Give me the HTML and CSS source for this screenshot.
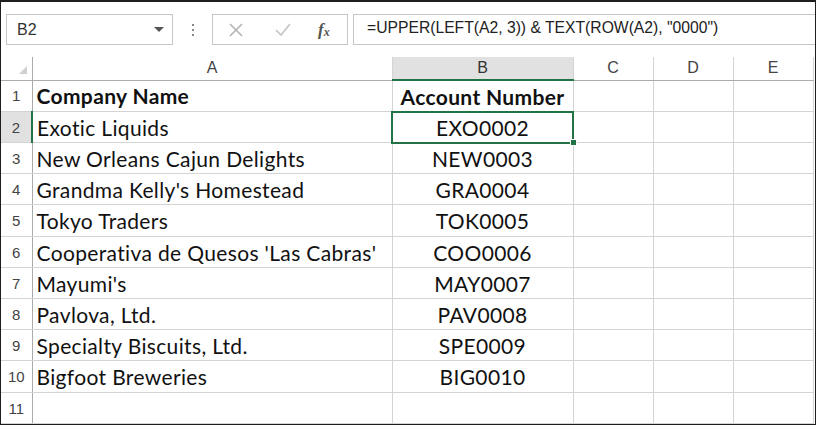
FILE: index.html
```html
<!DOCTYPE html>
<html lang="en">
<head>
  <meta charset="UTF-8">
  <title>Book1 - Account Numbers</title>
  <link rel="stylesheet" href="styles.css">
</head>
<body>
  <div class="sheet">
    <!-- name box + formula bar -->
    <div class="formula-bar">
      <div class="name-box">
        <span>B2</span>
        <span class="caret"></span>
      </div>
      <div class="grip"><i></i><i></i><i></i></div>
      <div class="fx-buttons">
        <svg class="btn-cancel" width="16" height="16" viewBox="0 0 16 16">
          <path d="M2 2 L14 14 M14 2 L2 14" stroke="#b4b4b4" stroke-width="1.6" fill="none"/>
        </svg>
        <svg class="btn-enter" width="18" height="16" viewBox="0 0 18 16">
          <path d="M2 8 L7 13 L16 2" stroke="#c4c4c4" stroke-width="1.6" fill="none"/>
        </svg>
        <span class="btn-fx">f<sub>x</sub></span>
      </div>
      <div class="formula-input">=UPPER(LEFT(A2, 3)) &amp; TEXT(ROW(A2), "0000")</div>
    </div>

    <!-- worksheet grid -->
    <table class="grid">
      <colgroup>
        <col class="c-rowhead">
        <col class="c-a">
        <col class="c-b">
        <col class="c-c">
        <col class="c-d">
        <col class="c-e">
      </colgroup>
      <thead>
        <tr>
          <th class="corner"><span class="corner-tri"></span></th>
          <th>A</th>
          <th class="active">B</th>
          <th>C</th>
          <th>D</th>
          <th>E</th>
        </tr>
      </thead>
      <tbody>
        <tr class="title-row">
          <td class="rowhead">1</td>
          <td>Company Name</td>
          <td class="num">Account Number</td>
          <td></td><td></td><td></td>
        </tr>
        <tr>
          <td class="rowhead active">2</td>
          <td>Exotic Liquids</td>
          <td class="num selected">EXO0002</td>
          <td></td><td></td><td></td>
        </tr>
        <tr>
          <td class="rowhead">3</td>
          <td>New Orleans Cajun Delights</td>
          <td class="num">NEW0003</td>
          <td></td><td></td><td></td>
        </tr>
        <tr>
          <td class="rowhead">4</td>
          <td>Grandma Kelly's Homestead</td>
          <td class="num">GRA0004</td>
          <td></td><td></td><td></td>
        </tr>
        <tr class="tall">
          <td class="rowhead">5</td>
          <td>Tokyo Traders</td>
          <td class="num">TOK0005</td>
          <td></td><td></td><td></td>
        </tr>
        <tr>
          <td class="rowhead">6</td>
          <td>Cooperativa de Quesos 'Las Cabras'</td>
          <td class="num">COO0006</td>
          <td></td><td></td><td></td>
        </tr>
        <tr>
          <td class="rowhead">7</td>
          <td>Mayumi's</td>
          <td class="num">MAY0007</td>
          <td></td><td></td><td></td>
        </tr>
        <tr>
          <td class="rowhead">8</td>
          <td>Pavlova, Ltd.</td>
          <td class="num">PAV0008</td>
          <td></td><td></td><td></td>
        </tr>
        <tr>
          <td class="rowhead">9</td>
          <td>Specialty Biscuits, Ltd.</td>
          <td class="num">SPE0009</td>
          <td></td><td></td><td></td>
        </tr>
        <tr class="tall">
          <td class="rowhead">10</td>
          <td>Bigfoot Breweries</td>
          <td class="num">BIG0010</td>
          <td></td><td></td><td></td>
        </tr>
        <tr>
          <td class="rowhead">11</td>
          <td></td><td></td><td></td><td></td><td></td>
        </tr>
      </tbody>
    </table>
  </div>
</body>
</html>
```

FILE: styles.css
```css
body {
  margin: 0;
  background: #fff;
  font-family: "Liberation Sans", Arial, sans-serif;
  color: #000;
}

.sheet {
  width: 816px;
  height: 425px;
  box-sizing: border-box;
  border: 1px solid #1e1e1e;
  border-top-width: 2px;
  overflow: hidden;
  background: #fff;
}

/* formula bar */
.formula-bar {
  height: 55px;
  box-sizing: border-box;
  padding: 12px 0 0 5px;
  display: flex;
  align-items: flex-start;
}
.name-box {
  width: 167px;
  height: 31px;
  box-sizing: border-box;
  border: 1px solid #c6c6c6;
  display: flex;
  align-items: center;
  justify-content: space-between;
  padding: 0 8px 0 10px;
  font-size: 16px;
  color: #333;
}
.caret {
  width: 0;
  height: 0;
  border-left: 5px solid transparent;
  border-right: 5px solid transparent;
  border-top: 5px solid #555;
}
.grip {
  width: 39px;
  height: 31px;
  display: flex;
  flex-direction: column;
  align-items: center;
  justify-content: center;
  gap: 3px;
}
.grip i {
  width: 2px;
  height: 2px;
  background: #888;
}
.fx-buttons {
  width: 136px;
  height: 31px;
  box-sizing: border-box;
  border: 1px solid #c6c6c6;
  display: flex;
  align-items: center;
  padding: 0 0 0 15px;
}
.btn-cancel {
  margin-right: 30px;
}
.btn-enter {
  margin-right: 26px;
}
.btn-fx {
  font-family: "Liberation Serif", "Times New Roman", serif;
  font-style: italic;
  font-weight: bold;
  font-size: 17px;
  color: #555;
}
.btn-fx sub {
  font-size: 12px;
  vertical-align: -1px;
}
.formula-input {
  flex: 1;
  height: 31px;
  box-sizing: border-box;
  margin-left: 5px;
  border: 1px solid #c6c6c6;
  border-right: none;
  padding: 4px 0 0 13px;
  font-size: 15.7px;
  color: #222;
  white-space: nowrap;
}

/* worksheet */
.grid {
  border-collapse: collapse;
  table-layout: fixed;
  width: 812px;
}
.c-rowhead { width: 31px; }
.c-a { width: 360px; }
.c-b { width: 181px; }
.c-c { width: 80px; }
.c-d { width: 80px; }
.c-e { width: 80px; }

.grid th {
  height: 22px;
  padding: 0;
  font-weight: normal;
  font-size: 16px;
  color: #444;
  text-align: center;
  border-right: 1px solid #d4d4d4;
  border-bottom: 1px solid #ababab;
}
.grid th.active {
  background: #e1e1e1;
  border-bottom: 2px solid #217346;
  color: #333;
}
.grid th.corner {
  position: relative;
  border-right-color: #ababab;
}
.corner-tri {
  position: absolute;
  right: 5px;
  bottom: 6px;
  width: 0;
  height: 0;
  border-left: 8px solid transparent;
  border-bottom: 8px solid #d0d0d0;
}

.grid td {
  height: 30px;
  padding: 0 0 0 4px;
  font-family: Lato, "Liberation Sans", sans-serif;
  font-size: 21px;
  letter-spacing: 0.35px;
  color: #111;
  white-space: nowrap;
  overflow: hidden;
  border-right: 1px solid #d4d4d4;
  border-bottom: 1px solid #d4d4d4;
}
.grid tr.tall td {
  height: 31px;
}
.grid td.rowhead {
  padding: 0;
  text-align: center;
  font-family: "Liberation Sans", Arial, sans-serif;
  font-size: 15px;
  letter-spacing: 0;
  color: #444;
  border-right: 1px solid #ababab;
}
.grid td.rowhead.active {
  background: #e1e1e1;
  border-right: 2px solid #217346;
}
.grid td.num {
  text-align: center;
  padding: 0;
}
.title-row td {
  font-weight: bold;
}
.title-row td.rowhead {
  font-weight: normal;
}

/* active cell with fill handle */
.grid td.selected {
  position: relative;
  outline: 2px solid #217346;
  outline-offset: -1px;
  overflow: visible;
}
.grid td.selected::after {
  content: "";
  position: absolute;
  right: -4px;
  bottom: -4px;
  width: 5px;
  height: 5px;
  background: #217346;
  border: 1px solid #fff;
}
```
